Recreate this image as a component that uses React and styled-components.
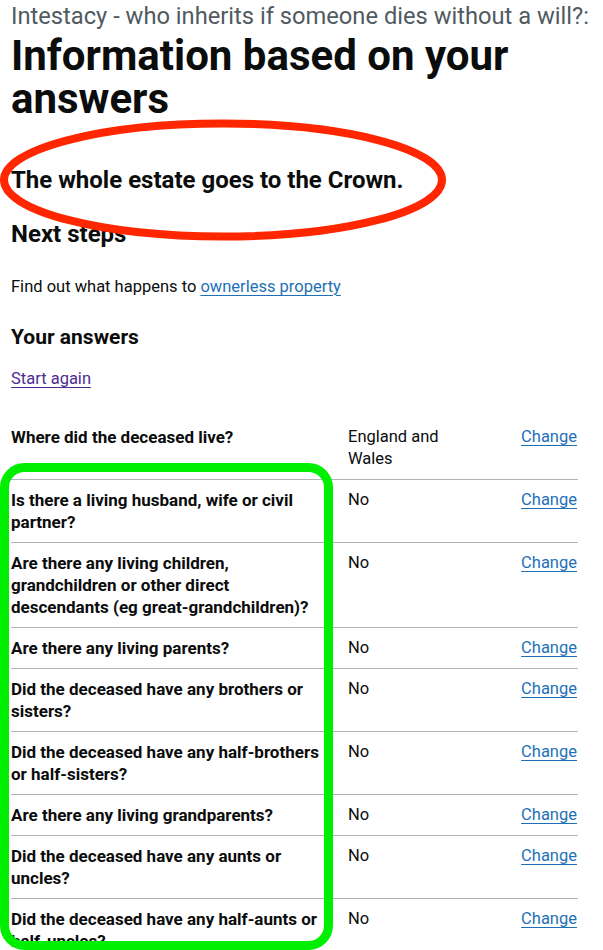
import React from 'react';
import styled, { createGlobalStyle } from 'styled-components';

const GlobalStyle = createGlobalStyle`
  html, body {
    margin: 0;
    padding: 0;
    background: #ffffff;
  }
  body {
    font-family: Roboto, "Liberation Sans", Arial, sans-serif;
    color: #0b0c0c;
    overflow: hidden;
  }
`;

const Page = styled.main`
  position: relative;
  width: 592px;
  padding: 2px 0 0 11px;
`;

const Caption = styled.span`
  display: block;
  font-size: 23.7px;
  line-height: 28px;
  color: #505a5f;
  white-space: nowrap;
`;

const Title = styled.h1`
  margin: 4px 0 0;
  width: 568px;
  font-size: 42px;
  line-height: 43px;
  font-weight: 700;
`;

const Outcome = styled.h2`
  margin: ${(p) => p.$top}px 0 0;
  font-size: 24px;
  line-height: 30px;
  font-weight: 700;
`;

const SubHeading = styled.h2`
  margin: 25px 0 0;
  font-size: 21px;
  line-height: 26px;
  font-weight: 700;
`;

const Body = styled.p`
  margin: ${(p) => p.$top}px 0 0;
  font-size: 16.5px;
  line-height: 24px;
`;

const Link = styled.a`
  color: ${(p) => (p.$visited ? '#4c2c92' : '#1d70b8')};
  text-decoration: underline;
  text-decoration-thickness: 1px;
  text-underline-offset: 0.16em;
`;

const SummaryList = styled.dl`
  width: 567px;
  margin: 26px 0 0;
  padding: 0;
`;

const SummaryRow = styled.div`
  display: grid;
  grid-template-columns: 317px 120px 1fr;
  column-gap: 20px;
  padding: 9px 0;
  border-bottom: 1px solid #b1b4b6;
  font-size: 16.5px;
  line-height: 22px;
`;

const Key = styled.dt`
  margin: 0;
  font-size: 17px;
  font-weight: 700;
`;

const Value = styled.dd`
  margin: 0;
`;

const Actions = styled.dd`
  margin: 0;
  padding-right: 1px;
  text-align: right;
`;

const Annotation = styled.svg`
  position: absolute;
  left: ${(p) => p.$x}px;
  top: ${(p) => p.$y}px;
  overflow: visible;
  pointer-events: none;
`;

const answers = [
  ['Where did the deceased live?', 'England and Wales'],
  ['Is there a living husband, wife or civil partner?', 'No'],
  ['Are there any living children, grandchildren or other direct descendants (eg great-grandchildren)?', 'No'],
  ['Are there any living parents?', 'No'],
  ['Did the deceased have any brothers or sisters?', 'No'],
  ['Did the deceased have any half-brothers or half-sisters?', 'No'],
  ['Are there any living grandparents?', 'No'],
  ['Did the deceased have any aunts or uncles?', 'No'],
  ['Did the deceased have any half-aunts or half-uncles?', 'No'],
];

export default function App() {
  return (
    <Page>
      <GlobalStyle />
      <Caption>Intestacy - who inherits if someone dies without a will?:</Caption>
      <Title>Information based on your answers</Title>
      <Outcome $top={45}>The whole estate goes to the Crown.</Outcome>
      <Outcome $top={23.5}>Next steps</Outcome>
      <Body $top={26.5}>
        Find out what happens to <Link href="#">ownerless property</Link>
      </Body>
      <SubHeading>Your answers</SubHeading>
      <Body $top={17.4}>
        <Link href="#" $visited>Start again</Link>
      </Body>
      <SummaryList>
        {answers.map(([question, answer]) => (
          <SummaryRow key={question}>
            <Key>{question}</Key>
            <Value>{answer}</Value>
            <Actions>
              <Link href="#">Change</Link>
            </Actions>
          </SummaryRow>
        ))}
      </SummaryList>

      {/* hand-drawn review marks lying over the page */}
      <Annotation $x={0} $y={118} width="450" height="126" viewBox="0 0 450 126">
        <ellipse cx="223" cy="62" rx="219" ry="56.5" fill="none" stroke="#ff2600" strokeWidth="8" />
      </Annotation>
      <Annotation $x={0} $y={462} width="336" height="490" viewBox="0 0 336 490">
        <rect x="4.5" y="5.5" width="324" height="478" rx="20" fill="none" stroke="#00ee00" strokeWidth="9" />
      </Annotation>
    </Page>
  );
}
